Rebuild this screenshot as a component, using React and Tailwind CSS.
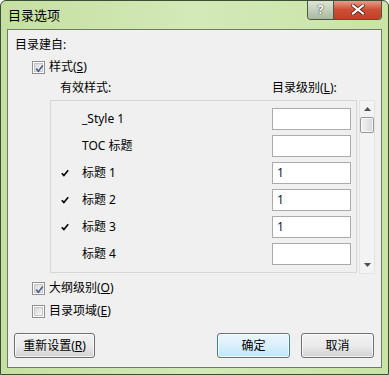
import React from "react";

const FONT = "font-['Noto_Sans','Noto_Sans_CJK_SC',sans-serif]";

function CheckBox({ checked }) {
  return (
    <div className="w-[13px] h-[13px] border border-[#8e8f8f] bg-white p-[1px] shrink-0">
      <div className="w-full h-full border border-[#c6c6c6] bg-gradient-to-br from-[#d9d9d9] to-[#f7f7f7] relative">
        {checked && (
          <svg viewBox="0 0 9 9" className="absolute left-[0px] top-[0px] w-[9px] h-[9px]">
            <path d="M1.2 4.6 L3.4 7.2 L7.8 1.4" fill="none" stroke="#4b6093" strokeWidth="1.7" />
          </svg>
        )}
      </div>
    </div>
  );
}

function Tick() {
  return (
    <svg viewBox="0 0 8 8" className="w-[8px] h-[8px]">
      <path d="M0.8 4.2 L2.9 6.6 L7.2 1.2" fill="none" stroke="#000" strokeWidth="1.6" />
    </svg>
  );
}

function Row({ label, checked, value }) {
  return (
    <div className="flex items-center h-[22px] mb-[5px] pr-[5px]">
      <div className="w-[31px] pl-[10px] flex items-center">{checked && <Tick />}</div>
      <div className="flex-1 text-[12px] leading-[16px] text-black">{label}</div>
      <div className="w-[79px] h-[22px] border border-[#ababab] bg-white flex items-center pl-[4px] text-[12px] leading-[16px] text-[#102040]">
        {value}
      </div>
    </div>
  );
}

function Button({ children, primary, className }) {
  return (
    <div
      className={
        "h-[25px] rounded-[3px] border flex items-center justify-center text-[12px] leading-[16px] text-black shadow-[inset_0_0_0_1px_rgba(255,255,255,0.7)] " +
        (primary
          ? "border-[#3c7fb1] bg-gradient-to-b from-[#eaf6fd] via-[#d9f0fc] to-[#bee6fd] "
          : "border-[#707070] bg-gradient-to-b from-[#f2f2f2] via-[#ebebeb] to-[#d2d2d2] ") +
        className
      }
    >
      {children}
    </div>
  );
}

export default function App() {
  return (
    <div
      className={
        "w-[389px] h-[375px] relative overflow-hidden border border-[#3f4d36] rounded-t-[6px] bg-gradient-to-r from-[#c6e0a1] via-[#d3e9b7] to-[#c9e4a6] " +
        FONT
      }
    >
      {/* title bar */}
      <div className="h-[28px] flex items-center pl-[7px]">
        <span className="text-[13px] leading-[16px] text-black">目录选项</span>
      </div>
      <div className="absolute top-[-1px] right-[6px] flex h-[20px] border border-t-0 border-[#4a5742] rounded-b-[4px] overflow-hidden">
        <div className="w-[26px] h-full bg-gradient-to-b from-[#dfe6d8] via-[#c6d0bd] to-[#a9b99d] flex items-center justify-center border-r border-[#4a5742] text-white font-bold text-[13px] leading-[13px] [text-shadow:0_0_1px_#222,0_0_1px_#222]">
          ?
        </div>
        <div className="w-[47px] h-full bg-gradient-to-b from-[#e8a493] via-[#cf4f35] to-[#c0402a] flex items-center justify-center">
          <svg viewBox="0 0 14 11" className="w-[14px] h-[11px]">
            <path d="M2 1.5 L12 9.5 M12 1.5 L2 9.5" stroke="#4a2018" strokeWidth="3.6" strokeLinecap="square" />
            <path d="M2 1.5 L12 9.5 M12 1.5 L2 9.5" stroke="#ffffff" strokeWidth="2.2" strokeLinecap="square" />
          </svg>
        </div>
      </div>

      {/* client panel */}
      <div className="mx-[6px] h-[339px] border border-[#6f7d66] bg-[#f0f0f0] flex flex-col">
        <div className="mt-[7px] pl-[7px] h-[16px] text-[12px] leading-[16px] text-black">目录建自:</div>

        <div className="mt-[6px] pl-[24px] h-[16px] flex items-center gap-[4px] text-[12px] leading-[16px] text-black">
          <CheckBox checked />
          <span>
            样式(<span className="underline">S</span>)
          </span>
        </div>

        <div className="mt-[5px] h-[16px] flex text-[12px] leading-[16px] text-black">
          <span className="ml-[52px] w-[212px]">有效样式:</span>
          <span>
            目录级别(<span className="underline">L</span>):
          </span>
        </div>

        <div className="mt-[4px] h-[174px] flex items-start">
          <div className="ml-[42px] w-[307px] h-[173px] border border-[#d6d6d6] bg-[#f0f0f0] pt-[7px]">
            <Row label="_Style 1" />
            <Row label="TOC 标题" />
            <Row label="标题 1" checked value="1" />
            <Row label="标题 2" checked value="1" />
            <Row label="标题 3" checked value="1" />
            <Row label="标题 4" />
          </div>
          <div className="ml-[2px] w-[16px] h-[174px] border border-[#e3e3e3] bg-[#f3f3f3] flex flex-col items-center">
            <div className="h-[16px] flex items-center justify-center">
              <svg viewBox="0 0 7 4" className="w-[7px] h-[4px]">
                <path d="M0 4 L3.5 0 L7 4 Z" fill="#505050" />
              </svg>
            </div>
            <div className="w-[14px] h-[16px] rounded-[2px] border border-[#979797] bg-gradient-to-r from-[#f2f2f2] via-[#e6e6e6] to-[#d6d6d6] shadow-[inset_0_0_0_1px_rgba(255,255,255,0.8)]" />
            <div className="flex-1" />
            <div className="h-[16px] flex items-center justify-center">
              <svg viewBox="0 0 7 4" className="w-[7px] h-[4px]">
                <path d="M0 0 L7 0 L3.5 4 Z" fill="#505050" />
              </svg>
            </div>
          </div>
        </div>

        <div className="mt-[6px] pl-[24px] h-[16px] flex items-center gap-[4px] text-[12px] leading-[16px] text-black">
          <CheckBox checked />
          <span>
            大纲级别(<span className="underline">O</span>)
          </span>
        </div>
        <div className="mt-[7px] pl-[24px] h-[16px] flex items-center gap-[4px] text-[12px] leading-[16px] text-black">
          <CheckBox />
          <span>
            目录项域(<span className="underline">E</span>)
          </span>
        </div>

        <div className="mt-[14px] flex items-center pl-[6px] pr-[7px]">
          <Button className="w-[81px]">
            <span>
              重新设置(<span className="underline">R</span>)
            </span>
          </Button>
          <div className="flex-1" />
          <Button primary className="w-[73px]">确定</Button>
          <Button className="w-[73px] ml-[11px]">取消</Button>
        </div>
      </div>
    </div>
  );
}
